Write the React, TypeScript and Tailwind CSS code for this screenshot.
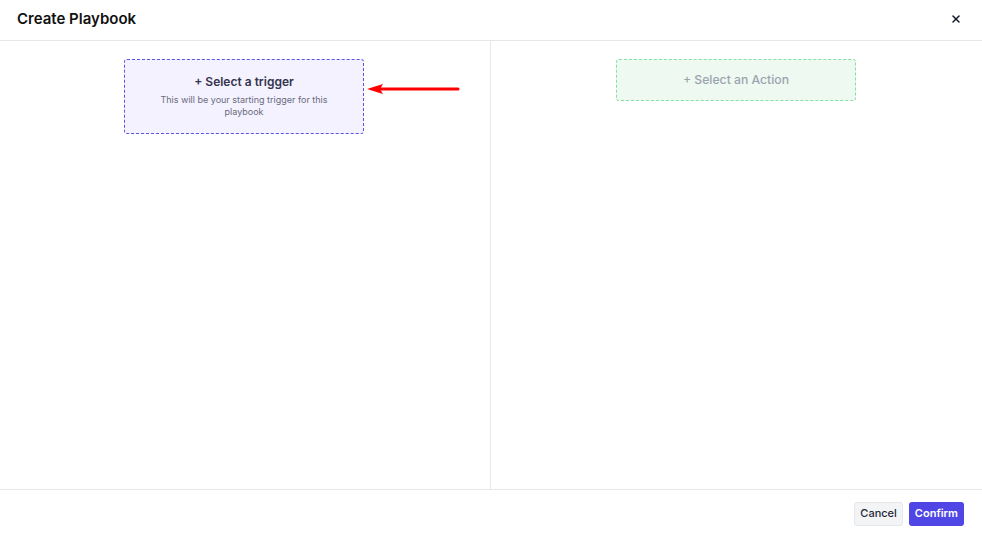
import React from 'react';
import { X } from 'lucide-react';

function App() {
  return (
    <div className="h-[538px] w-[982px] bg-white flex flex-col font-['Inter',sans-serif] text-gray-900">
      {/* Header */}
      <header className="h-[41px] flex items-center justify-between border-b border-gray-200 pl-[17px] pr-[20px] pb-[2px]">
        <h1 className="text-[15px] font-semibold text-[#111]">Create Playbook</h1>
        <button className="text-gray-900">
          <X className="h-[12px] w-[12px]" strokeWidth={3} />
        </button>
      </header>

      {/* Body */}
      <div className="flex-1 flex min-h-0">
        <div className="relative w-[491px] border-r border-gray-200 flex justify-center pt-[18px] pr-[2px]">
          <div className="w-[240px] h-[75px] border border-dashed border-[#5b54e6] rounded-[3px] bg-[#f3f2fe] flex flex-col items-center pt-[13px] cursor-pointer">
            <span className="text-[12px] font-semibold text-[#34344f] leading-[17px]">+ Select a trigger</span>
            <span className="mt-[4px] text-[9px] leading-[12px] text-[#6b6b80] text-center w-[180px]">
              This will be your starting trigger for this playbook
            </span>
          </div>
          {/* annotation arrow */}
          <svg className="absolute left-[366px] top-[41px]" width="96" height="14" viewBox="0 0 96 14">
            <line x1="14" y1="7" x2="92" y2="7" stroke="#ff0000" strokeWidth="3" strokeLinecap="round" />
            <polygon points="1,7 17,2 14,7 17,12" fill="#ff0000" />
          </svg>
        </div>
        <div className="flex-1 flex justify-center pt-[18px] pr-[1px]">
          <div className="w-[240px] h-[42px] border border-dashed border-[#86e0a4] rounded-[3px] bg-[#eef9f1] flex items-center justify-center cursor-pointer">
            <span className="text-[12.2px] font-medium text-[#9ca3af]">+ Select an Action</span>
          </div>
        </div>
      </div>

      {/* Footer */}
      <footer className="h-[49px] border-t border-gray-200 flex items-center justify-end gap-[6px] pr-[18px] pb-[1px]">
        <button className="h-[24px] px-[5px] rounded-[3px] bg-[#f3f4f6] border border-[#e5e7eb] text-[11px] font-medium text-[#1f2937]">
          Cancel
        </button>
        <button className="h-[24px] px-[6px] rounded-[3px] bg-[#4f46e5] text-[11px] font-semibold text-white">
          Confirm
        </button>
      </footer>
    </div>
  );
}

export default App;
